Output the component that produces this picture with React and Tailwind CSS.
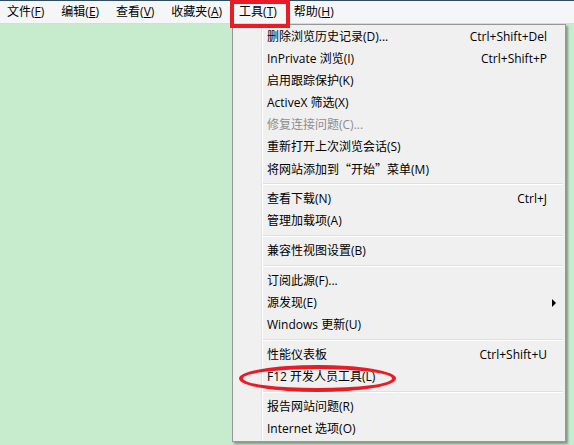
import React from "react";

const bar = [
  ["文件", "F"],
  ["编辑", "E"],
  ["查看", "V"],
  ["收藏夹", "A"],
  ["工具", "T"],
  ["帮助", "H"],
];

const cjk = { fontFamily: '"Noto Sans CJK SC", sans-serif' };

const groups = [
  [
    { label: "删除浏览历史记录(D)...", key: "Ctrl+Shift+Del" },
    { label: "InPrivate 浏览(I)", key: "Ctrl+Shift+P" },
    { label: "启用跟踪保护(K)" },
    { label: "ActiveX 筛选(X)" },
    { label: "修复连接问题(C)...", disabled: true },
    { label: "重新打开上次浏览会话(S)" },
    {
      label: (
        <>
          将网站添加到<span style={cjk}>“</span>开始<span style={cjk}>”</span>菜单(M)
        </>
      ),
    },
  ],
  [
    { label: "查看下载(N)", key: "Ctrl+J" },
    { label: "管理加载项(A)" },
  ],
  [{ label: "兼容性视图设置(B)" }],
  [
    { label: "订阅此源(F)..." },
    { label: "源发现(E)", sub: true },
    { label: "Windows 更新(U)" },
  ],
  [
    { label: "性能仪表板", key: "Ctrl+Shift+U" },
    { label: "F12 开发人员工具(L)" },
  ],
  [
    { label: "报告网站问题(R)" },
    { label: "Internet 选项(O)" },
  ],
];

function Row({ item }) {
  return (
    <div className={`relative h-[22px] flex items-center justify-between pl-[34px] pr-[18px] ${item.disabled ? "text-[#8d8d8d]" : "text-black"}`}>
      <span>{item.label}</span>
      {item.key && <span>{item.key}</span>}
      {item.sub && (
        <span className="absolute right-[9px] top-[7px] w-0 h-0 border-y-[4px] border-y-transparent border-l-[4px] border-l-black" />
      )}
    </div>
  );
}

export default function App() {
  return (
    <div
      className="relative w-[574px] h-[445px] overflow-hidden bg-[#c7ebcd] text-[12px]"
      style={{ fontFamily: '"Open Sans", "Noto Sans CJK SC", sans-serif' }}
    >
      <div className="h-px bg-[#2f4d5e]" />
      <div className="h-[23px] bg-[#f5f6f7] border-b border-[#d9dadb] flex items-center gap-[17px] pl-[7px] text-black">
        {bar.map(([t, k]) => (
          <span key={k}>
            {t}(<span className="underline">{k}</span>)
          </span>
        ))}
      </div>

      <div className="absolute left-[232px] top-[24px] w-[334px] bg-[#f0f0f0] border border-[#979797] py-px shadow-[2px_2px_2px_rgba(0,0,0,0.35)]">
        <div className="absolute left-[28px] top-0 bottom-0 w-px bg-[#e2e3e3]" />
        <div className="absolute left-[29px] top-0 bottom-0 w-px bg-white" />
        {groups.map((g, gi) => (
          <div key={gi}>
            {gi > 0 && (
              <div className="h-[8px] flex items-center pl-[30px] pr-[2px]">
                <div className="w-full border-t border-[#e0e0e0] border-b border-b-white" />
              </div>
            )}
            {g.map((item, i) => (
              <Row key={i} item={item} />
            ))}
          </div>
        ))}
      </div>

      <div className="absolute left-[230px] top-0 w-[60px] h-[28px] border-[4px] border-[#ea1b24]" />
      <div className="absolute left-[239px] top-[365px] w-[157px] h-[27px] border-[4px] border-[#ea1b24] rounded-[50%]" />
    </div>
  );
}
